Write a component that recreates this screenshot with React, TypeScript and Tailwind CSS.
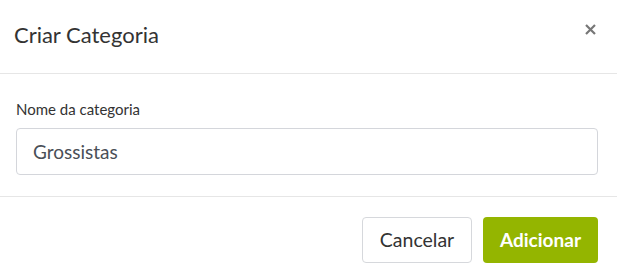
export default function App() {
  return (
    <div className="w-[617px] h-[279px] bg-white font-['Lato','Liberation_Sans',sans-serif] text-[#333]">
      {/* Header */}
      <div className="h-[74px] border-b border-[#e6e6e6] flex items-start justify-between pl-[14px] pr-[20px]">
        <h2 className="mt-[20px] text-[22px] leading-[30px] text-[#333]">Criar Categoria</h2>
        <button className="mt-[23px] w-[13px] h-[13px] flex items-center justify-center text-[#777]" aria-label="Fechar">
          <svg width="11" height="11" viewBox="0 0 11 11">
            <path d="M1 1L10 10M10 1L1 10" stroke="currentColor" strokeWidth="2.2" strokeLinecap="butt" />
          </svg>
        </button>
      </div>

      {/* Body */}
      <div className="pl-4 pr-[19px] pt-[25px] pb-[21px] border-b border-[#e6e6e6]">
        <label className="block text-[15px] leading-[20px] text-[#333] mb-[9px]">Nome da categoria</label>
        <input
          className="w-full h-[47px] rounded-[4px] border border-[#d4d6db] px-[16px] text-[19px] text-[#4a4f57] outline-none"
          defaultValue="Grossistas"
        />
      </div>

      {/* Footer */}
      <div className="flex justify-end gap-[11px] pt-[20px] pr-[19px]">
        <button className="h-[46px] w-[110px] rounded-[4px] border border-[#d6d8dc] bg-white text-[19.5px] text-[#333]">
          Cancelar
        </button>
        <button className="h-[46px] w-[115px] rounded-[4px] bg-[#94b500] text-[19px] font-bold text-white">
          Adicionar
        </button>
      </div>
    </div>
  )
}
